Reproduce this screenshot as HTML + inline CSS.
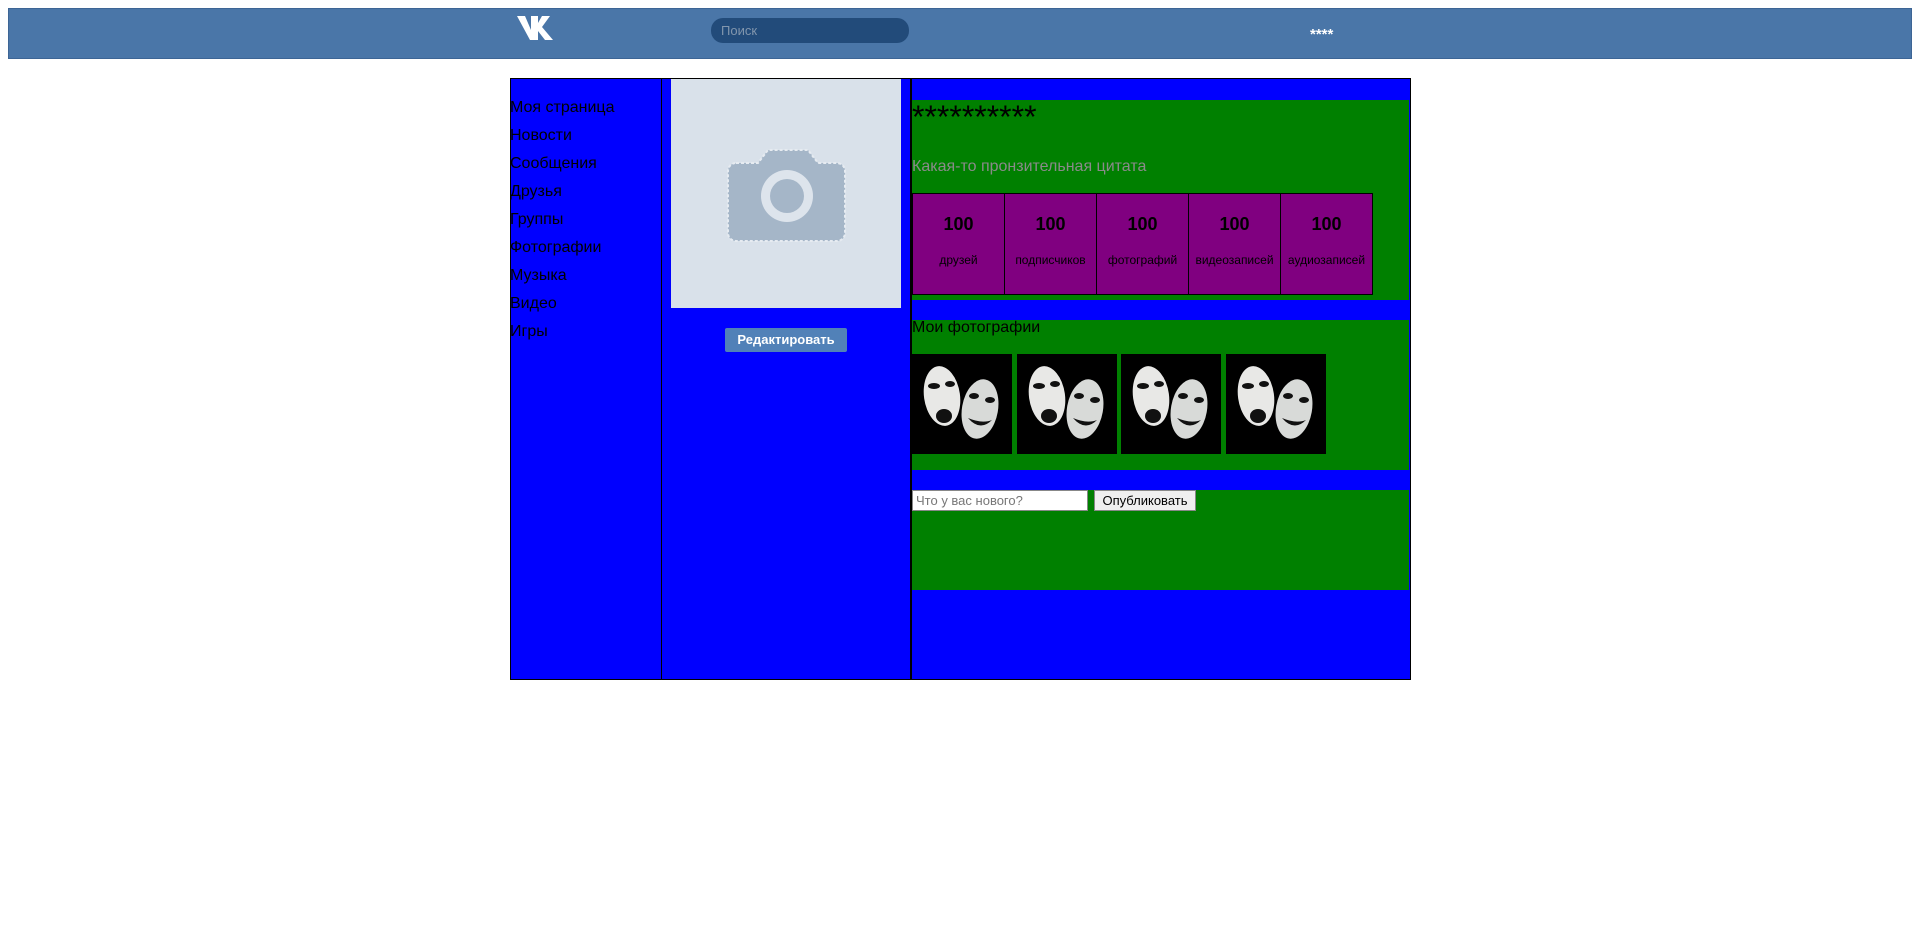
<!DOCTYPE html>
<html><head><meta charset="utf-8"><style>
body{margin:0;width:1920px;height:937px;background:#fff;font-family:"Liberation Sans",sans-serif;position:relative;overflow:hidden}
.a{position:absolute}
.menu div{position:absolute;left:510px;font-size:16px;color:#000;line-height:20px}
.st{position:absolute;top:193px;width:91px;height:100px;background:#800080;border:1px solid #000;text-align:center}
.st b{display:block;margin-top:20px;font-size:18px}
.st span{display:block;margin-top:18px;font-size:12px}
</style></head><body>
<div class="a" style="left:8px;top:8px;width:1902px;height:49px;background:#4a76a8;border:1px solid #3d6595"></div>
<svg class="a" style="left:517px;top:15px" width="44" height="25" viewBox="0 0 44 25"><path d="M0 1h8l6 14V1h7v7l4-7h8l-8 11 11 13h-8l-7-9v9h-8L0 1z" fill="#fff"/></svg>
<div class="a" style="left:711px;top:18px;width:198px;height:25px;background:#224b7a;border-radius:12px"></div>
<div class="a" style="left:721px;top:23px;font-size:13px;color:#8296ad">Поиск</div>
<div class="a" style="left:1310px;top:26px;font-size:15px;color:#fff;font-weight:bold">****</div>

<div class="a" style="left:510px;top:78px;width:899px;height:600px;background:#00f;border:1px solid #000"></div>
<div class="a" style="left:661px;top:79px;width:1px;height:600px;background:#000"></div>
<div class="a" style="left:910px;top:79px;width:2px;height:600px;background:#000"></div>
<div class="menu">
<div style="top:98px">Моя страница</div><div style="top:126px">Новости</div><div style="top:154px">Сообщения</div><div style="top:182px">Друзья</div><div style="top:210px">Группы</div><div style="top:238px">Фотографии</div><div style="top:266px">Музыка</div><div style="top:294px">Видео</div><div style="top:322px">Игры</div>
</div>
<div class="a" style="left:671px;top:79px;width:230px;height:229px;background:#d9e1ea"></div>
<svg class="a" style="left:671px;top:79px" width="230" height="229"><path d="M65 84h22l10-13h40l10 13h19a8 8 0 0 1 8 8v62a8 8 0 0 1-8 8H65a8 8 0 0 1-8-8V92a8 8 0 0 1 8-8z" fill="#a5b6c8" stroke="#e6ebf1" stroke-width="2" stroke-dasharray="3 2"/><circle cx="116" cy="117" r="26" fill="#dde4ec"/><circle cx="116" cy="117" r="17" fill="#a5b6c8"/></svg>
<div class="a" style="left:725px;top:328px;width:122px;height:24px;background:#5181b8;border-radius:2px;color:#fff;font-size:13px;font-weight:bold;text-align:center;line-height:24px">Редактировать</div>

<div class="a" style="left:912px;top:100px;width:497px;height:200px;background:#008000"></div>
<div class="a" style="left:912px;top:101px;font-size:32px;line-height:32px">**********</div>
<div class="a" style="left:912px;top:158px;font-size:16px;color:#8a8a8a">Какая-то пронзительная цитата</div>
<div class="st" style="left:912px"><b>100</b><span>друзей</span></div>
<div class="st" style="left:1004px"><b>100</b><span>подписчиков</span></div>
<div class="st" style="left:1096px"><b>100</b><span>фотографий</span></div>
<div class="st" style="left:1188px"><b>100</b><span>видеозаписей</span></div>
<div class="st" style="left:1280px"><b>100</b><span>аудиозаписей</span></div>

<div class="a" style="left:912px;top:320px;width:497px;height:150px;background:#008000"></div>
<div class="a" style="left:912px;top:319px;font-size:16px">Мои фотографии</div>
<svg class="a" style="left:912px;top:354px" width="420" height="100">
<defs><g id="m"><rect width="100" height="100" fill="#000"/><ellipse cx="30" cy="42" rx="18" ry="30" fill="#e8e8e6" transform="rotate(-8 30 42)"/><ellipse cx="68" cy="55" rx="18" ry="30" fill="#d8dad8" transform="rotate(10 68 55)"/><ellipse cx="22" cy="32" rx="6" ry="3" fill="#111"/><ellipse cx="38" cy="30" rx="5" ry="3" fill="#111"/><ellipse cx="32" cy="62" rx="8" ry="7" fill="#111"/><ellipse cx="62" cy="42" rx="5" ry="3" fill="#111"/><ellipse cx="78" cy="46" rx="5" ry="3" fill="#111"/><path d="M56 64q12 14 24 2q-10 4-24-2z" fill="#111"/></g></defs>
<use href="#m"/><use href="#m" x="105"/><use href="#m" x="209"/><use href="#m" x="314"/></svg>

<div class="a" style="left:912px;top:490px;width:497px;height:100px;background:#008000"></div>
<div class="a" style="left:912px;top:490px;height:19px;background:#fff;border:1px solid #888;font-size:13px;color:#777;line-height:19px;padding-left:3px;width:171px">Что у вас нового?</div>
<div class="a" style="left:1094px;top:490px;width:100px;height:19px;background:#efefef;border:1px solid #888;font-size:13px;text-align:center;line-height:19px">Опубликовать</div>
</body></html>
